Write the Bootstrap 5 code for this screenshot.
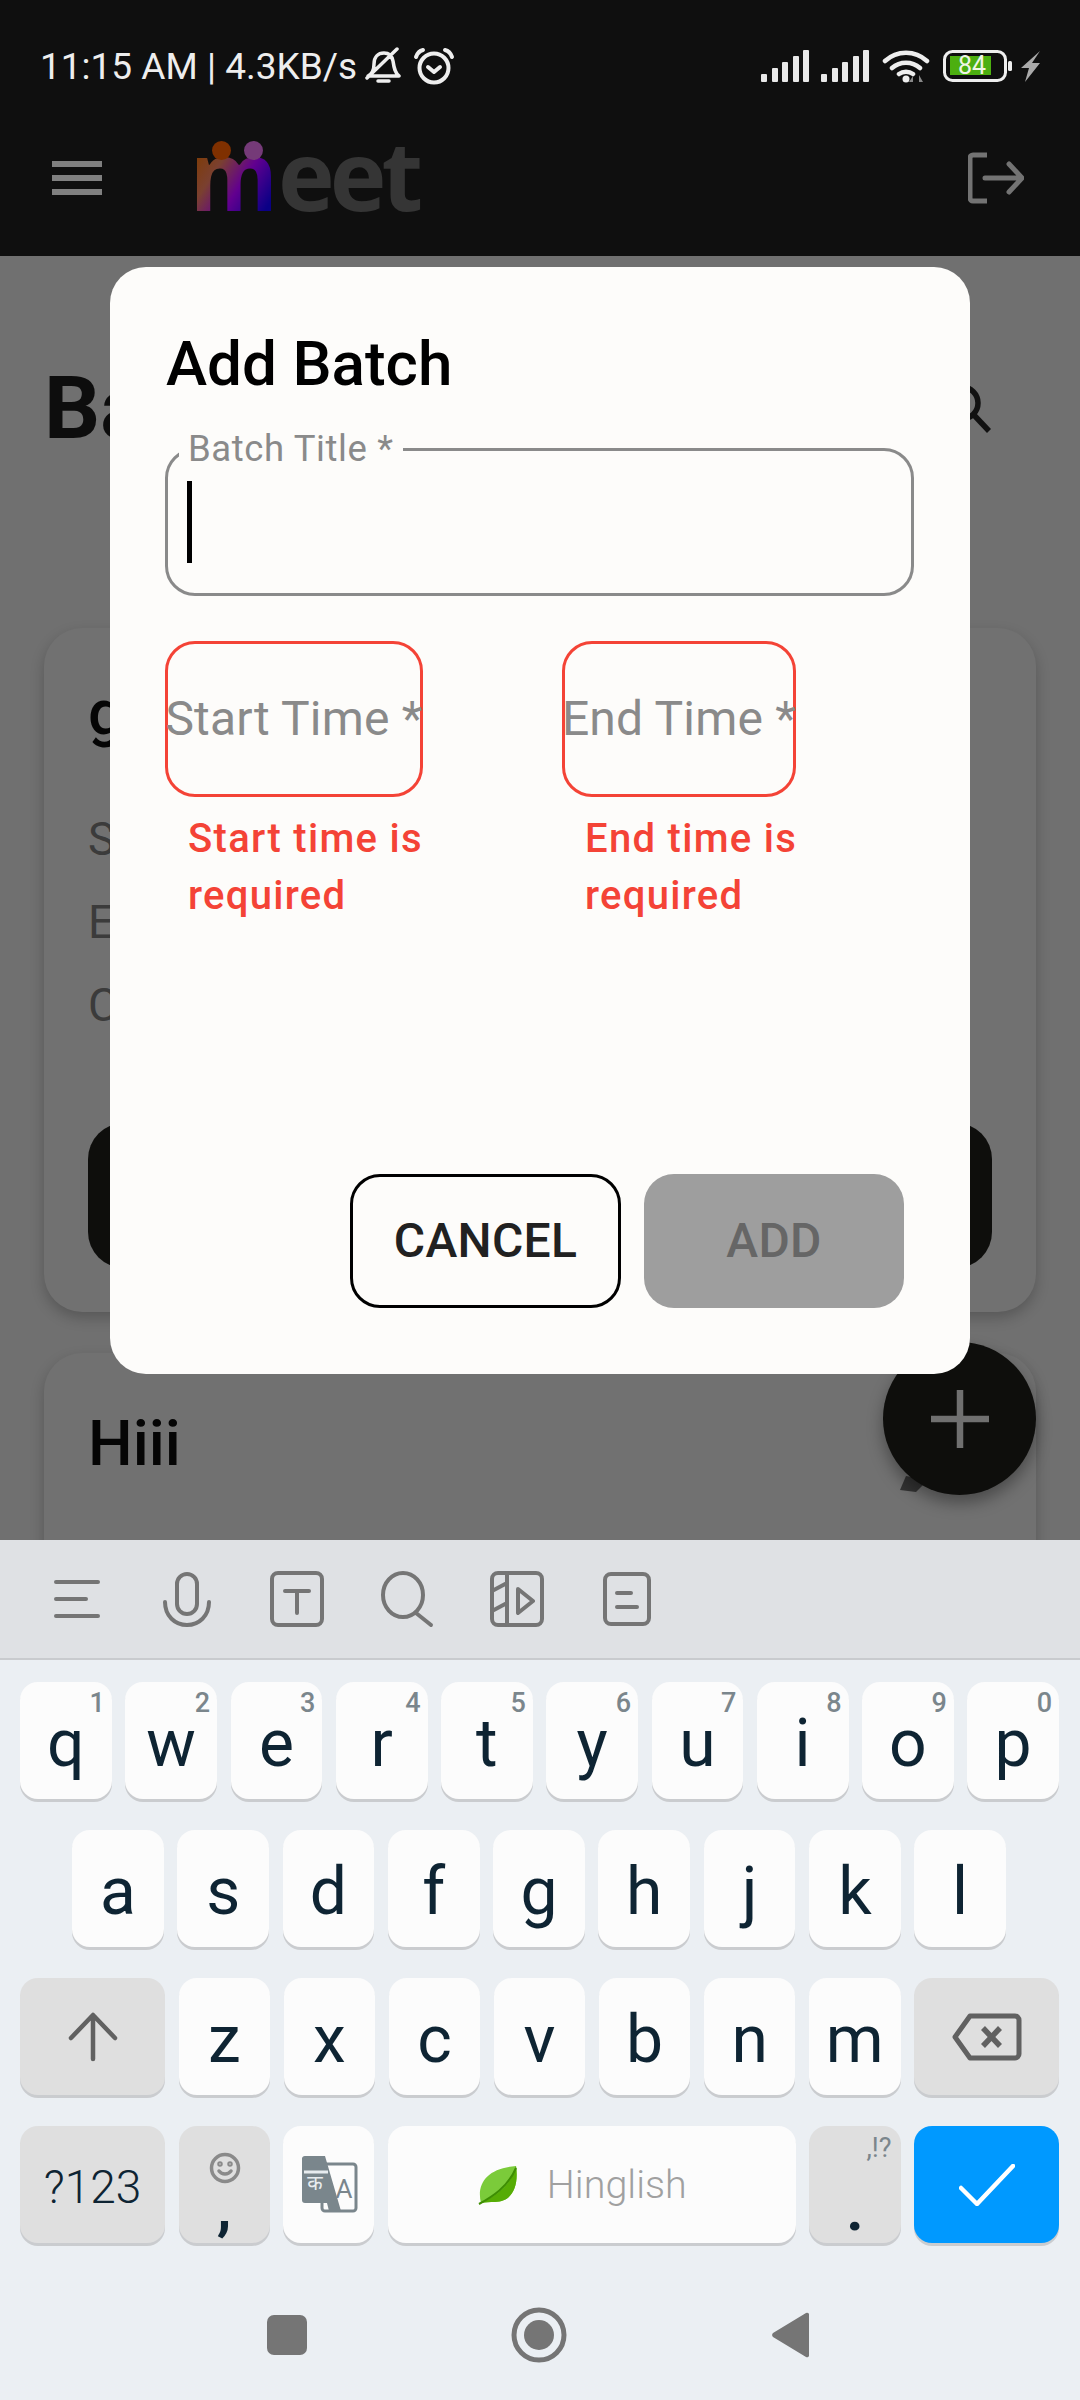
<!DOCTYPE html>
<html lang="en">
<head>
<meta charset="UTF-8">
<meta name="viewport" content="width=device-width, initial-scale=1.0">
<title>Add Batch</title>
<link rel="stylesheet" href="https://cdn.jsdelivr.net/npm/bootstrap@5.3.2/dist/css/bootstrap.min.css">
<style>
html, body { margin: 0; background: #ebeff3; }
body { font-family: Roboto, "Liberation Sans", sans-serif; }
.phone { width: 1080px; height: 2400px; overflow: hidden; }

/* top bars */
.top-bars { background: #0f0f0f; }
.status-row { height: 100px; padding: 32px 40px 0 40px; color: #eeeeee; font-size: 37px; line-height: 1; }
.bell-ico { margin-left: 8px; }
.alarm-ico { margin-left: 11px; }
.gap-12 { margin-left: 12px; }
.gap-13 { margin-left: 13px; }
.gap-5 { margin-left: 5px; }
.app-row { height: 156px; padding: 0 56px 0 52px; }
.burger-bars { width: 50px; height: 34px; display: flex; flex-direction: column; justify-content: space-between; }
.burger-bars i { display: block; height: 6px; background: #808080; }
.logo-box { width: 240px; height: 100px; margin-left: 96px; font-family: "Open Sans", sans-serif; font-weight: 700; }
.logo-m { position: absolute; left: -8px; top: -19px; font-size: 96px; line-height: 130px; transform: scaleX(.93); transform-origin: left center;
  background: linear-gradient(125deg, #7f3b00 18%, #7a4030 38%, #62008f 58%, #0a0086 82%); -webkit-background-clip: text; background-clip: text; color: transparent; }
.logo-rest { position: absolute; left: 80px; top: -19px; font-size: 96px; line-height: 130px; letter-spacing: -5px; color: #353535; }
.logo-head { position: absolute; top: 13px; width: 19px; height: 19px; border-radius: 50%; }
.head-a { left: 14px; background: #7f3000; }
.head-b { left: 46px; background: #753a78; }

/* dimmed page behind the dialog */
.stage { height: 1284px; background: #707070; overflow: hidden; }
.page-head { margin: 102px 88px 0 44px; height: 100px; }
.page-title { font-size: 88px; line-height: 100px; font-weight: 700; color: #0d0d0d; }
.batch-box { margin: 0 44px; border-radius: 38px; background: #717171; box-shadow: 0 6px 14px rgba(0,0,0,.22); padding: 45px 44px 44px; }
.batch-first { margin-top: 170px; height: 684px; }
.batch-second { margin-top: 41px; height: 400px; padding-top: 51px; }
.batch-name { font-size: 63px; line-height: 80px; font-weight: 500; color: #050505; }
.batch-line { font-size: 46px; line-height: 83px; color: #3b3b3b; }
.first-line { margin-top: 45px; }
.batch-btn { height: 145px; margin-top: 76px; border-radius: 36px; background: #0e0e0c; }
.pencil-bit { position: absolute; left: 898px; top: 1218px; }
.fab-btn { position: absolute; left: 883px; top: 1086px; width: 153px; height: 153px; border-radius: 50%; background: #0e0e0c; box-shadow: 0 8px 16px rgba(0,0,0,.35); }

/* dialog */
.add-dialog { position: absolute; left: 110px; top: 11px; width: 860px; height: 1107px; padding: 57px 56px 66px 55px; background: #fdfcfa; border-radius: 36px; }
.dialog-title { font-size: 62px; line-height: 80px; font-weight: 500; color: #000; margin: 0; padding-left: 1px; }
.title-field { position: relative; width: 749px; height: 148px; margin-top: 44px; border: 3px solid #8a8a8a; border-radius: 30px; }
.title-label { position: absolute; left: 11px; top: -24px; padding: 0 9px; background: #fdfcfa; font-size: 36.5px; line-height: 44px; color: #8a8a8a; letter-spacing: .6px; }
.text-caret { position: absolute; left: 19px; top: 30px; width: 5px; height: 82px; background: #000; }
.time-col { flex: 0 0 397px; margin-top: 45px; }
.time-box { height: 156px; border: 3px solid #f44336; border-radius: 30px; font-size: 48px; letter-spacing: .2px; color: #8a8a8a; white-space: nowrap; justify-content: center; }
.start-box { width: 258px; }
.end-box { width: 234px; }
.time-hint { width: 270px; margin: 13px 0 0 23px; font-size: 40px; letter-spacing: 1.3px; line-height: 57px; font-weight: 500; color: #f44336; }
.btn.dlg-btn { height: 134px; border-radius: 30px; font-size: 48px; letter-spacing: .3px; font-weight: 500; line-height: 1; padding: 0; }
.btn.cancel-btn { width: 271px; margin-right: 23px; border: 3px solid #000; background: #fdfcfa; color: #212121; }
.btn.add-btn { width: 260px; margin-right: 10px; border: 0; background: #9e9e9e; color: #666666; opacity: 1; }

/* keyboard */
.kb-tools { height: 120px; padding-left: 22px; background: #dfe1e4; border-bottom: 2px solid #c9cbce; }
.kb-tool { width: 110px; }
.keys-wrap { padding: 22px 21px 0 20px; background: #ebeff3; }
.key-row { height: 117px; gap: 13.5px; margin-bottom: 31px; }
.key-row.inset { padding: 0 53px 0 52px; }
.kb-key { position: relative; flex: 1 1 0; min-width: 0; border-radius: 18px; background: #fcfcfc; box-shadow: 0 3px 0 #cacccf; color: #0e2433; font-size: 66px; text-align: center; padding-top: 6px; line-height: 111px; }
.kb-fn { background: #dfdfdf; }
.kb-wide { flex: 0 0 145px; }
.kb-num { position: absolute; top: 8px; right: 7px; font-size: 27px; line-height: 27px; font-weight: 500; color: #7b868c; }
.kb-sym { font-size: 46px; font-weight: 300; }
.smile-ico { position: absolute; left: 30px; top: 26px; }
.kb-comma { position: absolute; left: 0; right: 0; top: 52px; font-size: 60px; line-height: 60px; font-weight: 700; }
.kb-key.kb-space { flex: 0 0 408px; gap: 29px; padding: 0 0 0 90px; font-size: 39.5px; font-weight: 300; line-height: 1; color: #a0a0a0; }
.kb-top { position: absolute; right: 9px; top: 9px; font-size: 27px; line-height: 27px; color: #7b868c; }
.kb-dot { position: absolute; left: 0; right: 0; top: 54px; font-size: 60px; line-height: 60px; font-weight: 700; }
.kb-enter { background: #0099ff; }
.kb-ico { display: flex; align-items: center; justify-content: center; height: 100%; padding: 0; }
.nav-row { height: 126px; padding: 0 0 4px 267px; background: #ebeff3; }
.nav-circle { margin-left: 204px; }
.nav-back { margin-left: 204px; }
</style>
</head>
<body>
<div class="phone d-flex flex-column">

    <div class="top-bars">
        <div class="status-row d-flex align-items-center justify-content-between">
            <div class="d-flex align-items-center">
                <span>11:15 AM | 4.3KB/s</span>
                <svg class="bell-ico" width="37" height="38" viewBox="0 0 37 38" fill="none" stroke="#eee" stroke-width="3.5" stroke-linecap="round" stroke-linejoin="round"><path d="M3 29c4-2 6-5 6-12 0-7 4-11 10-11 5 0 8 3 9 8 1 7 2 12 6 15zM3 29h31M13 34h11M32 2 2 31"/></svg>
                <svg class="alarm-ico" width="42" height="38" viewBox="0 0 42 38" fill="none" stroke="#eee" stroke-width="4" stroke-linecap="round" stroke-linejoin="round"><circle cx="21" cy="21" r="14.5"/><path d="M15 20l6 5 6-5M3 10c1-3 3-6 7-7M39 10c-1-3-3-6-7-7"/></svg>
            </div>
            <div class="d-flex align-items-center">
                <svg width="48" height="32" viewBox="0 0 48 32" fill="#e8e8e8"><rect x="0" y="24" width="6" height="8" rx="1"/><rect x="11" y="18" width="6" height="14" rx="1"/><rect x="21" y="12" width="6" height="20" rx="1"/><rect x="32" y="6" width="6" height="26" rx="1"/><rect x="42" y="0" width="6" height="32" rx="1"/></svg>
                <svg class="gap-12" width="48" height="32" viewBox="0 0 48 32" fill="#e8e8e8"><rect x="0" y="24" width="6" height="8" rx="1"/><rect x="11" y="18" width="6" height="14" rx="1"/><rect x="21" y="12" width="6" height="20" rx="1"/><rect x="32" y="6" width="6" height="26" rx="1"/><rect x="42" y="0" width="6" height="32" rx="1"/></svg>
                <svg class="gap-13" width="48" height="34" viewBox="0 0 48 34" fill="none"><path d="M3 12c12-11 30-11 42 0M10 19c8-7 20-7 28 0M17 25c4-3 10-3 14 0" stroke="#eee" stroke-width="4.5" stroke-linecap="round"/><circle cx="24" cy="30" r="3.5" fill="#eee"/><path d="M31 33v-6l-4 6zM37 33v-7l4 7z" fill="#888"/></svg>
                <svg class="gap-13" width="72" height="32" viewBox="0 0 72 32" fill="none"><rect x="1.5" y="1.5" width="61" height="29" rx="8" stroke="#eee" stroke-width="3"/><rect x="7" y="6" width="41" height="19" fill="#4caf10"/><rect x="65" y="11" width="4" height="10" rx="1.5" fill="#eee"/><text x="29" y="24" font-family="Roboto, sans-serif" font-size="25" fill="#f0f5e6" text-anchor="middle">84</text></svg>
                <svg class="gap-5" width="20" height="31" viewBox="0 0 20 31" fill="#aaa"><path d="M20 0 1 17h8L5 31l15-19h-8z"/></svg>
            </div>
        </div>
        <div class="app-row d-flex align-items-center">
            <div class="burger-bars"><i></i><i></i><i></i></div>
            <div class="logo-box position-relative">
                <span class="logo-m">m</span>
                <span class="logo-rest">eet</span>
                <span class="logo-head head-a"></span>
                <span class="logo-head head-b"></span>
            </div>
            <svg class="ms-auto" width="56" height="52" viewBox="0 0 56 52" fill="none" stroke="#737373" stroke-width="5" stroke-linejoin="round"><path d="M19 3H5a3 3 0 0 0-3 3v40a3 3 0 0 0 3 3h14"/><path d="M17 26h35M41 12l13 14-13 14" stroke-linecap="round"/></svg>
        </div>
    </div>

    <div class="stage position-relative">
        <div class="page-head d-flex justify-content-between align-items-center">
            <div class="page-title">Ba</div>
            <svg width="50" height="50" viewBox="0 0 50 50" fill="none" stroke="#111" stroke-width="5.5"><circle cx="20" cy="20" r="16"/><path d="M31 31l16 17"/></svg>
        </div>
        <div class="batch-box batch-first">
            <div class="batch-name">g</div>
            <div class="batch-line first-line">S</div>
            <div class="batch-line">E</div>
            <div class="batch-line">C</div>
            <div class="batch-btn"></div>
        </div>
        <div class="batch-box batch-second">
            <div class="batch-name">Hiii</div>
        </div>
        <svg class="pencil-bit" width="32" height="18" viewBox="0 0 32 18" fill="#333"><path d="M2 16 8 2l22 4-12 12z"/></svg>
        <div class="fab-btn d-flex align-items-center justify-content-center">
            <svg width="58" height="58" viewBox="0 0 58 58" fill="none" stroke="#707070" stroke-width="6.5"><path d="M29 0v58M0 29h58"/></svg>
        </div>

        <div class="add-dialog d-flex flex-column">
            <h2 class="dialog-title">Add Batch</h2>
            <div class="title-field">
                <span class="title-label">Batch Title *</span>
                <span class="text-caret"></span>
            </div>
            <div class="d-flex">
                <div class="time-col">
                    <div class="time-box start-box d-flex align-items-center">Start Time *</div>
                    <div class="time-hint">Start time is required</div>
                </div>
                <div class="time-col">
                    <div class="time-box end-box d-flex align-items-center">End Time *</div>
                    <div class="time-hint">End time is required</div>
                </div>
            </div>
            <div class="d-flex justify-content-end mt-auto">
                <button type="button" class="btn dlg-btn cancel-btn">CANCEL</button>
                <button type="button" class="btn dlg-btn add-btn">ADD</button>
            </div>
        </div>
    </div>

    <div class="kb-tools d-flex align-items-center">
        <div class="kb-tool d-flex justify-content-center"><svg width="60" height="60" viewBox="0 0 60 60" fill="none" stroke="#757575" stroke-width="4" stroke-linecap="round"><path d="M9 13h42M9 30h30M9 47h42"/></svg></div>
        <div class="kb-tool d-flex justify-content-center"><svg width="60" height="60" viewBox="0 0 60 60" fill="none" stroke="#757575" stroke-width="4" stroke-linecap="round"><rect x="20" y="5" width="20" height="40" rx="10"/><path d="M8 33c0 14 10 23 22 23s22-9 22-23"/></svg></div>
        <div class="kb-tool d-flex justify-content-center"><svg width="60" height="60" viewBox="0 0 60 60" fill="none" stroke="#757575" stroke-width="4" stroke-linecap="round"><rect x="5" y="4" width="50" height="52" rx="6"/><path d="M18 22h24M30 22v22"/></svg></div>
        <div class="kb-tool d-flex justify-content-center"><svg width="60" height="60" viewBox="0 0 60 60" fill="none" stroke="#757575" stroke-width="4" stroke-linecap="round"><ellipse cx="26" cy="26" rx="20" ry="22"/><path d="M39 44l15 12"/></svg></div>
        <div class="kb-tool d-flex justify-content-center"><svg width="60" height="60" viewBox="0 0 60 60" fill="none" stroke="#757575" stroke-width="4" stroke-linecap="round" stroke-linejoin="round"><rect x="5" y="4" width="50" height="52" rx="6"/><path d="M20 4v52M5 22l15-8M5 42l15-8M31 20l15 12-15 12z"/></svg></div>
        <div class="kb-tool d-flex justify-content-center"><svg width="60" height="60" viewBox="0 0 60 60" fill="none" stroke="#757575" stroke-width="4" stroke-linecap="round"><rect x="8" y="5" width="44" height="50" rx="6"/><path d="M20 24h14M20 38h20"/></svg></div>
    </div>

    <div class="keys-wrap">
        <div class="key-row d-flex">
            <div class="kb-key">q<span class="kb-num">1</span></div>
            <div class="kb-key">w<span class="kb-num">2</span></div>
            <div class="kb-key">e<span class="kb-num">3</span></div>
            <div class="kb-key">r<span class="kb-num">4</span></div>
            <div class="kb-key">t<span class="kb-num">5</span></div>
            <div class="kb-key">y<span class="kb-num">6</span></div>
            <div class="kb-key">u<span class="kb-num">7</span></div>
            <div class="kb-key">i<span class="kb-num">8</span></div>
            <div class="kb-key">o<span class="kb-num">9</span></div>
            <div class="kb-key">p<span class="kb-num">0</span></div>
        </div>
        <div class="key-row inset d-flex">
            <div class="kb-key">a</div>
            <div class="kb-key">s</div>
            <div class="kb-key">d</div>
            <div class="kb-key">f</div>
            <div class="kb-key">g</div>
            <div class="kb-key">h</div>
            <div class="kb-key">j</div>
            <div class="kb-key">k</div>
            <div class="kb-key">l</div>
        </div>
        <div class="key-row d-flex">
            <div class="kb-key kb-fn kb-wide kb-ico">
                <svg width="50" height="50" viewBox="0 0 50 50" fill="none" stroke="#616161" stroke-width="4.5" stroke-linecap="round" stroke-linejoin="round"><path d="M25 47V4M3 26 25 3l22 23"/></svg>
            </div>
            <div class="kb-key">z</div>
            <div class="kb-key">x</div>
            <div class="kb-key">c</div>
            <div class="kb-key">v</div>
            <div class="kb-key">b</div>
            <div class="kb-key">n</div>
            <div class="kb-key">m</div>
            <div class="kb-key kb-fn kb-wide kb-ico">
                <svg width="70" height="48" viewBox="0 0 70 48" fill="none" stroke="#616161" stroke-width="5" stroke-linejoin="round"><path d="M18 3h45a4 4 0 0 1 4 4v34a4 4 0 0 1-4 4H18L3 24z"/><path d="M31 15l17 18M48 15 31 33" stroke-width="5.5"/></svg>
            </div>
        </div>
        <div class="key-row d-flex">
            <div class="kb-key kb-fn kb-wide kb-sym">?123</div>
            <div class="kb-key kb-fn">
                <svg class="smile-ico" width="32" height="32" viewBox="0 0 32 32" fill="none" stroke="#8a8a8a" stroke-width="3.5" stroke-linecap="round"><circle cx="16" cy="16" r="13.5"/><path d="M10 19c3 4 9 4 12 0"/><circle cx="11" cy="12" r="1"/><circle cx="21" cy="12" r="1"/></svg>
                <span class="kb-comma">,</span>
            </div>
            <div class="kb-key kb-ico">
                <svg width="58" height="60" viewBox="0 0 58 60" fill="none"><rect x="22" y="9" width="34" height="47" rx="3" stroke="#7a868c" stroke-width="3"/><path d="M2 3a3 3 0 0 1 3-2h20l16 55H29l-2-8H5a3 3 0 0 1-3-3z" fill="#7a868c"/><text x="44" y="43" font-family="Roboto, sans-serif" font-size="26" fill="#7a868c" text-anchor="middle">A</text><path d="M4 17h24" stroke="#e8ecef" stroke-width="3"/><text x="15" y="35" font-family="'Noto Sans', sans-serif" font-size="20" fill="#e8ecef" text-anchor="middle">क</text></svg>
            </div>
            <div class="kb-key kb-space d-flex align-items-center">
                <svg width="40" height="40" viewBox="0 0 40 40"><path d="M3 38C-2 18 10 3 38 1c3 20-4 36-21 36-5 0-10 0-14 1z" fill="#7bcb3a"/><path d="M38 1c3 20-4 36-21 36-5 0-10 0-14 1C20 30 33 20 38 1z" fill="#56ac05"/><path d="M1 39C14 32 30 22 38 3" fill="none" stroke="#3d8d03" stroke-width="2"/></svg>
                <span>Hinglish</span>
            </div>
            <div class="kb-key kb-fn">
                <span class="kb-top">,!?</span>
                <span class="kb-dot">.</span>
            </div>
            <div class="kb-key kb-wide kb-enter kb-ico">
                <svg width="56" height="42" viewBox="0 0 56 42" fill="none" stroke="#fff" stroke-width="4.5" stroke-linecap="round" stroke-linejoin="round"><path d="M2 24l16 16L54 2"/></svg>
            </div>
        </div>
    </div>

    <div class="nav-row d-flex align-items-center">
        <svg width="40" height="40" viewBox="0 0 40 40"><rect width="40" height="40" rx="7" fill="#757575"/></svg>
        <svg class="nav-circle" width="56" height="56" viewBox="0 0 56 56" fill="none"><circle cx="28" cy="28" r="25" stroke="#757575" stroke-width="5"/><circle cx="28" cy="28" r="15" fill="#757575"/></svg>
        <svg class="nav-back" width="38" height="46" viewBox="0 0 38 46"><path d="M35 1a2 2 0 0 1 3 2v40a2 2 0 0 1-3 2L2 25a3 3 0 0 1 0-4z" fill="#757575"/></svg>
    </div>
</div>
<script src="https://cdn.jsdelivr.net/npm/bootstrap@5.3.2/dist/js/bootstrap.bundle.min.js"></script>
</body>
</html>
